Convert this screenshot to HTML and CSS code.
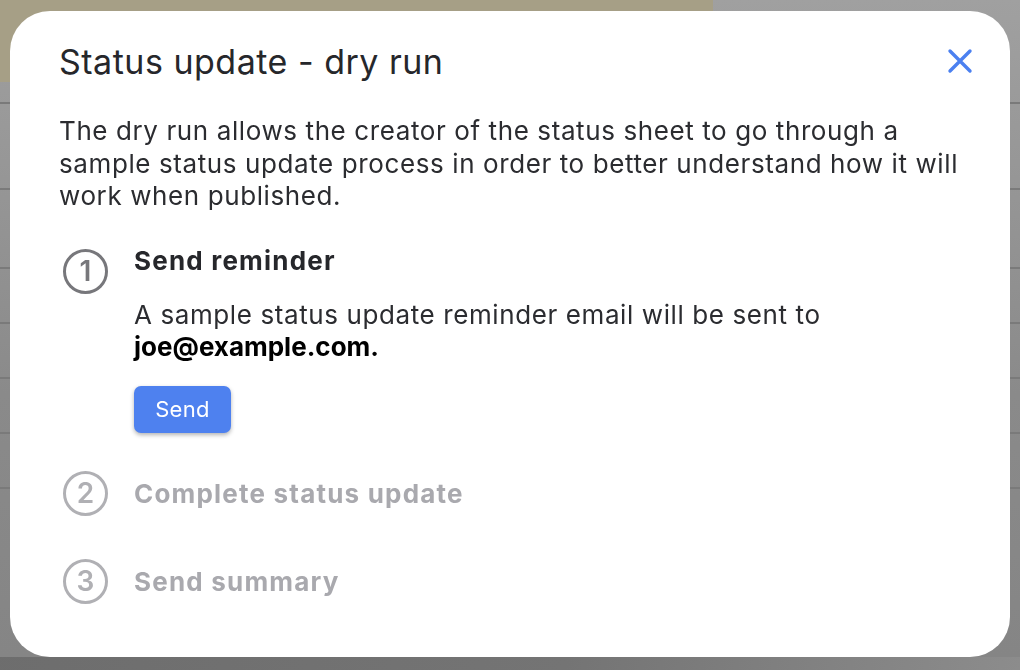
FILE: index.html
```html
<!DOCTYPE html>
<html lang="en">
<head>
  <meta charset="UTF-8">
  <meta name="viewport" content="width=device-width, initial-scale=1.0">
  <title>Status update - dry run</title>
  <link rel="stylesheet" href="styles.css">
</head>
<body>
  <div class="backdrop">
    <div class="backdrop-header"></div>
    <div class="backdrop-rows">
      <div class="row row-first"></div>
      <div class="row"></div>
      <div class="row"></div>
      <div class="row"></div>
      <div class="row"></div>
      <div class="row"></div>
      <div class="row"></div>
    </div>
  </div>

  <div class="modal">
    <div class="modal-header">
      <h2 class="modal-title">Status update - dry run</h2>
      <button class="close-btn" aria-label="Close">
        <svg width="26" height="26" viewBox="0 0 26 26">
          <path d="M3 3 L23 23 M23 3 L3 23" stroke="#4b80f0" stroke-width="3.4" stroke-linecap="round" fill="none"/>
        </svg>
      </button>
    </div>

    <p class="intro">The dry run allows the creator of the status sheet to go through a sample status update process in order to better understand how it will work when published.</p>

    <ol class="steps">
      <li class="step active">
        <span class="step-num">1</span>
        <div class="step-body">
          <h3 class="step-title">Send reminder</h3>
          <p class="step-text">A sample status update reminder email will be sent to <strong>joe@example.com.</strong></p>
          <button class="send-btn">Send</button>
        </div>
      </li>
      <li class="step">
        <span class="step-num">2</span>
        <div class="step-body">
          <h3 class="step-title">Complete status update</h3>
        </div>
      </li>
      <li class="step">
        <span class="step-num">3</span>
        <div class="step-body">
          <h3 class="step-title">Send summary</h3>
        </div>
      </li>
    </ol>
  </div>
</body>
</html>
```

FILE: styles.css
```css
* {
  box-sizing: border-box;
}

html, body {
  height: 100%;
}

body {
  margin: 0;
  font-family: Inter, "Noto Sans", Arial, sans-serif;
  background: linear-gradient(100deg, #6c6c6c 0%, #747474 60%, #8c8c8c 100%);
  overflow: hidden;
}

/* page behind the dimmed overlay */
.backdrop {
  height: 657px;
  background: linear-gradient(180deg, #a0a0a0 0%, #8a8a8a 60%, #858585 100%);
}

.backdrop-header {
  width: 713px;
  height: 82px;
  background: #a69f86;
}

.backdrop-rows {
  display: flex;
  flex-direction: column;
}

.row {
  height: 55px;
  border-bottom: 2px solid #7a7a7a;
}

.row-first {
  height: 22px;
}

.row:nth-child(2) {
  height: 86px;
}

.row:nth-child(3) {
  height: 79px;
}

.modal {
  position: fixed;
  top: 11px;
  left: 10px;
  right: 10px;
  bottom: 13px;
  background: #fff;
  border-radius: 40px;
  padding: 27px 38px 0 49px;
  color: #26272b;
}

.modal-header {
  display: flex;
  justify-content: space-between;
  align-items: center;
}

.modal-title {
  margin: 0;
  font-size: 34px;
  font-weight: 400;
  line-height: 48px;
  letter-spacing: 0.5px;
}

.close-btn {
  border: 0;
  background: none;
  padding: 0;
  margin-right: -1px;
  margin-top: -2px;
  display: flex;
  cursor: pointer;
}

.intro {
  margin: 29px 0 0;
  font-size: 26px;
  line-height: 32.5px;
  letter-spacing: 0.6px;
  color: #2b2c30;
}

.steps {
  list-style: none;
  margin: 30px 0 0;
  padding: 0;
  display: flex;
  flex-direction: column;
}

.step {
  display: flex;
  gap: 26px;
  height: 88px;
}

.step.active {
  height: auto;
  padding-bottom: 43px;
}

.step-num {
  flex: none;
  width: 45px;
  height: 45px;
  margin-left: 4px;
  margin-top: -5px;
  border: 3px solid #b0b0b4;
  border-radius: 50%;
  display: flex;
  align-items: center;
  justify-content: center;
  font-size: 28px;
  font-weight: 600;
  color: #b0b0b4;
}

.step.active .step-num {
  margin-top: 6px;
  border-color: #77777b;
  color: #77777b;
}

.step-title {
  margin: 0;
  font-size: 26px;
  font-weight: 700;
  line-height: 36px;
  letter-spacing: 1.2px;
  color: #a9a9ae;
}

.step.active .step-title {
  color: #26272b;
}

.step-text {
  margin: 20px 0 0;
  font-size: 26px;
  line-height: 32px;
  letter-spacing: 0.6px;
  color: #2b2c30;
}

.step-text strong {
  color: #000;
  letter-spacing: 0;
}

.send-btn {
  margin-top: 23px;
  width: 97px;
  height: 47px;
  border: 0;
  border-radius: 7px;
  background: #4e81ef;
  color: #fff;
  font-family: inherit;
  font-size: 22px;
  letter-spacing: 0.3px;
  box-shadow: 0 2px 4px rgba(0, 0, 0, 0.3);
  cursor: pointer;
}
```
